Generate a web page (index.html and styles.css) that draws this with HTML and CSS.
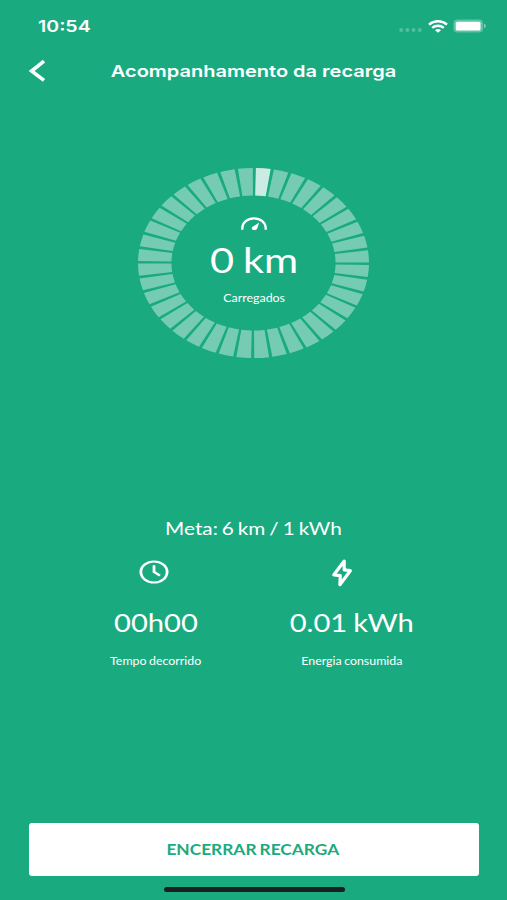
FILE: index.html
```html
<!DOCTYPE html>
<html lang="pt-BR">
<head>
<meta charset="utf-8">
<title>Acompanhamento da recarga</title>
<link rel="stylesheet" href="styles.css">
</head>
<body>
<main class="screen">
  <header class="status">
    <span class="wide time">10:54</span>
    <div class="indicators">
      <svg class="dots" viewBox="0 0 24 4"><circle cx="2.2" cy="2" r="1.9"/><circle cx="8.4" cy="2" r="1.9"/><circle cx="14.6" cy="2" r="1.9"/><circle cx="20.8" cy="2" r="1.9"/></svg>
      <svg class="wifi" viewBox="0 0 20 13" fill="none" stroke="#fff" stroke-width="2.5"><path d="M1 4.6C6 .2 14 .2 19 4.6"/><path d="M4.2 7.9c3.3-2.9 8.3-2.9 11.6 0"/><path d="M7 10.2c1.8-1.5 4.2-1.5 6 0L10 12.8z" fill="#fff" stroke="none"/></svg>
      <svg class="battery" viewBox="0 0 34 14"><rect x=".5" y=".5" width="29.5" height="13" rx="4" fill="#fff" fill-opacity=".3"/><rect x="2.8" y="2.7" width="24.7" height="8.8" rx="1.5" fill="#fff"/><path d="M31 4.8c2.4.6 2.4 3.8 0 4.4z" fill="#fff" fill-opacity=".45"/></svg>
    </div>
  </header>
  <nav class="nav">
    <svg class="back" viewBox="0 0 18 24"><path d="M16 2.2 3.6 12 16 21.4" fill="none" stroke="#fff" stroke-width="3.6"/></svg>
    <h1 class="wide title">Acompanhamento da recarga</h1>
  </nav>
  <section class="gauge">
    <svg class="ring" viewBox="0 0 190 190" preserveAspectRatio="none" fill="none" stroke="#fff" stroke-width="27.5">
      <g transform="rotate(-88.8 95 95)">
        <circle cx="95" cy="95" r="81.25" pathLength="360" stroke-dasharray="7.4 1.6" stroke-opacity=".4"/>
        <circle cx="95" cy="95" r="81.25" pathLength="360" stroke-dasharray="7.4 352.6" stroke-opacity=".62"/>
      </g>
    </svg>
    <div class="reading">
      <svg class="meter" viewBox="0 0 26 14" fill="none" stroke="#fff"><path d="M1.3 12.7v-1.4C1.3 5.6 6.5 1.4 13 1.4s11.7 4.2 11.7 9.9v1.4" stroke-width="2.3"/><path d="m18.2 5.6-1.9 5.7c-.5 1.5-2 2.1-3.7 1.8-1.7-.4-2.5-2.1-1.2-3.2z" fill="#fff" stroke="none"/></svg>
      <span class="wide distance">0 km</span>
      <span class="wide label">Carregados</span>
    </div>
  </section>
  <p class="goal"><span class="wide">Meta: 6 km / 1 kWh</span></p>
  <section class="stats">
    <div class="stat">
      <svg class="clock" viewBox="0 0 24 24" preserveAspectRatio="none" fill="none" stroke="#fff" stroke-width="2.2"><circle cx="12" cy="12" r="10.5"/><path d="M12 5.3V12l4.8 3.6"/></svg>
      <span class="wide value">00h00</span>
      <span class="wide label">Tempo decorrido</span>
    </div>
    <div class="stat">
      <svg class="bolt" viewBox="0 0 20 28" fill="none" stroke="#fff" stroke-width="3.2" stroke-linejoin="round"><path d="M12.2 2 1.9 15.8l6.4.9-.4 9L18.3 11.7l-6.1-.8z"/></svg>
      <span class="wide value">0.01 kWh</span>
      <span class="wide label">Energia consumida</span>
    </div>
  </section>
  <footer class="footer">
    <button class="finish"><span class="wide">ENCERRAR RECARGA</span></button>
    <div class="home"></div>
  </footer>
</main>
</body>
</html>
```
FILE: styles.css
```css
* { box-sizing: border-box; }
body { margin: 0; background: #19ab7f; color: #fff; font-family: Lato, sans-serif; }
svg { display: block; }
.screen { width: 507px; height: 900px; display: flex; flex-direction: column; overflow: hidden; }
/* Type is set extended, matching the wide proportions of the gauge. */
.wide { display: block; white-space: nowrap; transform: scaleX(1.22); }
.status { height: 52px; padding: 0 20px 0 38px; display: flex; align-items: center; justify-content: space-between; }
.time { font: 600 16px/20px Inter, sans-serif; transform-origin: left; }
.indicators { display: flex; align-items: center; }
.dots { width: 24px; height: 4px; margin: 8px 5px 0 0; fill: #fff; fill-opacity: .25; }
.wifi { width: 20px; height: 13px; margin-right: 5px; }
.battery { width: 34px; height: 14px; }
.nav { height: 38px; padding-left: 28px; display: flex; align-items: center; }
.back { width: 18px; height: 24px; }
.title { flex: 1; margin: 0 46px 0 0; text-align: center; font: 600 16.4px/22px Inter, sans-serif; }
.gauge { width: 231px; height: 190px; margin: 78px auto 0; display: grid; }
.ring, .reading { grid-area: 1 / 1; }
.ring { width: 231px; height: 190px; }
.reading { display: flex; flex-direction: column; align-items: center; padding: 49px 0 0 1px; }
.meter { width: 26px; height: 14px; }
.distance { font-size: 34px; line-height: 40px; margin-top: 9px; word-spacing: -1.5px; }
.label { font-size: 10.5px; line-height: 14px; transform: scaleX(1.18); word-spacing: -.6px; }
.reading .label { margin-top: 11px; }
.goal { margin: 160px 0 0; display: flex; justify-content: center; font-size: 17px; line-height: 22px; word-spacing: -1.1px; }
.stats { margin: 18px 57px 0 58px; display: grid; grid-template-columns: 1fr 1fr; }
.stat { display: flex; flex-direction: column; align-items: center; }
.clock { width: 30px; height: 24px; margin: 2px 0 2px -5px; }
.bolt { width: 20px; height: 28px; margin: 1px 0 -1px -21px; }
.value { font-size: 24.3px; line-height: 30px; margin-top: 22px; word-spacing: -1.2px; transform: scaleX(1.2); }
.stat .label { margin-top: 16px; }
.footer { margin-top: auto; padding: 0 28px 8px 29px; }
.finish { display: flex; align-items: center; justify-content: center; width: 100%; height: 53px; padding: 0 2px 0 0; border: 0; border-radius: 3px; background: #fff; color: #19ab7f; font: 700 14.2px/20px Lato, sans-serif; word-spacing: -1px; }
.home { width: 181px; height: 5px; margin: 11px auto 0; border-radius: 3px; background: #1b1f20; }
```
